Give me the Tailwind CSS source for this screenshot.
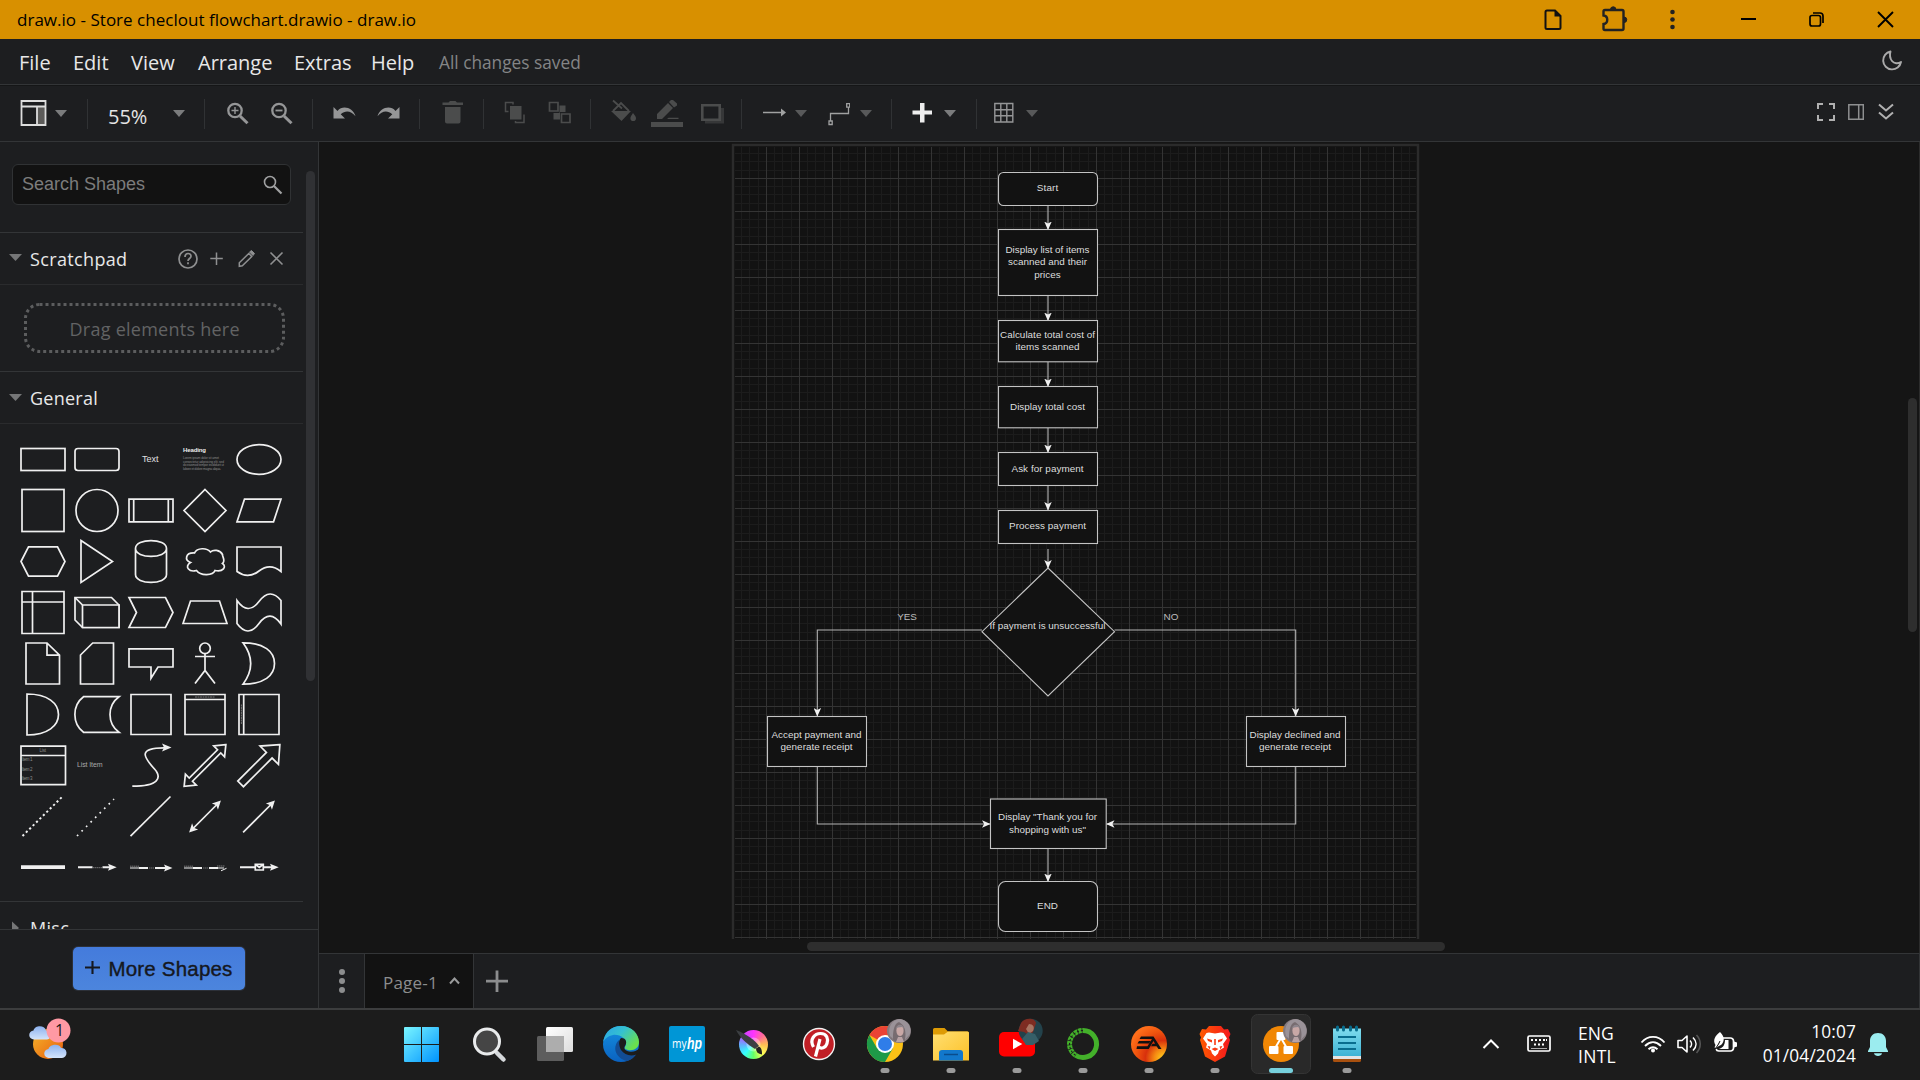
<!DOCTYPE html>
<html lang="en">
<head>
<meta charset="utf-8">
<title>draw.io - Store checlout flowchart.drawio - draw.io</title>
<script src="https://cdn.jsdelivr.net/npm/@tailwindcss/browser@4"></script>
</head>
<body class="w-[1920px] h-[1080px] overflow-hidden flex flex-col bg-[#1d1e20] font-['Open_Sans','Noto_Sans',sans-serif] text-[#e8e8e8]">

<svg class="hidden">
  <symbol id="caret" viewBox="0 86 12 55"><path d="M0 110h12l-6 7z" fill="currentColor"/></symbol>
  <symbol id="avatar" viewBox="0 0 24 24">
    <circle cx="12" cy="12" r="12" fill="#857b7f"/>
    <path d="M12 1C5 2 3 9 4 19l5 4h7l5-5C22 9 19 1 12 1z" fill="#776c70"/>
    <path d="M12 3c-6 2-6 12-6 17l-3-3C0 8 6 0 13 0c7 1 12 7 10 15l-5 6c1-7 1-14-6-18z" fill="#9a9298"/>
    <ellipse cx="13" cy="11.500" rx="3.600" ry="5.500" fill="#c9a8a6"/>
    <path d="M9 9.500c1-5 7-5 8 0l-2-1.500-4 .5z" fill="#8d858c"/>
    <path d="M11 18h4l2 5H9z" fill="#b9a3a5"/>
  </symbol>
</svg>

<!-- Window title bar -->
<header class="h-[39px] shrink-0 bg-[#d89000] text-black flex items-center pl-[17px]">
  <span class="text-[17px] leading-none whitespace-nowrap tracking-[.02px]">draw.io - Store checlout flowchart.drawio - draw.io</span>
  <svg class="ml-auto w-[18px] h-[39px]" viewBox="1544 0 18 39" fill="none" stroke="#111" stroke-width="2"><path d="M1547 10.500h8l5.500 5.500v11.500a1.500 1.500 0 0 1-1.500 1.500h-12a1.500 1.500 0 0 1-1.500-1.500v-15.500a1.500 1.500 0 0 1 1.500-1.500z"/><path d="M1554.500 10v6.500h6.500z" fill="#111" stroke="none"/></svg>
  <svg class="ml-[39px] w-[27px] h-[39px]" viewBox="1601 0 27 39"><path d="M1605 10h17a1.500 1.500 0 0 1 1.500 1.500v17a1.500 1.500 0 0 1-1.500 1.500h-17a1.500 1.500 0 0 1-1.500-1.500v-4.500c5-.5 5-8 0-8.500v-4a1.500 1.500 0 0 1 1.500-1.500z" fill="none" stroke="#222" stroke-width="2.400"/><path d="M1610.500 9.500a2.700 2.700 0 0 1 5.400 0zM1624 17a2.700 2.700 0 0 1 0 5.500z" fill="#222" stroke="#222"/></svg>
  <svg class="ml-[41px] w-2 h-[39px]" viewBox="1669 0 8 39" fill="#222"><circle cx="1672.500" cy="12" r="2.300"/><circle cx="1672.500" cy="19.500" r="2.300"/><circle cx="1672.500" cy="27" r="2.300"/></svg>
  <svg class="ml-[64px] w-[15px] h-[39px]" viewBox="1741 0 15 39"><path d="M1741 18h15v2h-15z"/></svg>
  <svg class="ml-[52px] w-[17px] h-[39px]" viewBox="1808 0 17 39" fill="none" stroke="#000" stroke-width="1.700"><rect x="1810" y="15.500" width="10.500" height="10.500" rx="2"/><path d="M1813 13h7a3 3 0 0 1 3 3v7"/></svg>
  <svg class="ml-[52px] mr-[26px] w-[17px] h-[39px]" viewBox="1877 0 17 39" stroke="#000" stroke-width="1.900"><path d="M1878 12l15 15m0-15l-15 15"/></svg>
</header>

<!-- Menu bar -->
<nav class="h-[46px] shrink-0 border-b border-[#333537] flex items-center pl-[19px] text-[20px] leading-none whitespace-nowrap">
  <span class="w-[54px] pt-[3px]">File</span>
  <span class="w-[58px] pt-[3px]">Edit</span>
  <span class="w-[67px] pt-[3px]">View</span>
  <span class="w-[96px] pt-[3px]">Arrange</span>
  <span class="w-[77px] pt-[3px]">Extras</span>
  <span class="w-[68px] pt-[3px]">Help</span>
  <span class="text-[17.300px] pt-[2px] text-[#848586]">All changes saved</span>
  <svg class="ml-auto mr-[17px] w-[23px] h-[45px]" viewBox="1880 39 23 45"><path d="M1890.500 51.500a9 9 0 1 0 10.500 10.500c-3 2-7 1.500-9-1s-2.500-6-1.500-9.500z" fill="none" stroke="#aaa" stroke-width="1.900" stroke-linejoin="round"/></svg>
</nav>

<!-- Toolbar -->
<div class="h-[57px] shrink-0 border-t border-t-[#151617] border-b border-b-[#333537] flex items-stretch text-[#7b7c7d]">
  <svg class="ml-[20px] w-[27px] h-[55px]" viewBox="20 86 27 55"><path d="M37 107h9v18h-9z" fill="#5c5b59"/><path d="M21.500 101h24v24h-24zM21.500 106.500h24M37 106.500V125" fill="none" stroke="#ddd" stroke-width="1.800"/></svg>
  <svg class="ml-[8px] w-[12px] h-[55px]"><use href="#caret"/></svg>
  <i class="ml-[20px] w-px h-[30px] mt-[13px] bg-[#303234]"></i>
  <span class="ml-[20px] w-[41px] text-[20px] leading-none mt-[21px] text-[#e4e4e4]">55%</span>
  <svg class="ml-[24px] w-[12px] h-[55px]"><use href="#caret"/></svg>
  <i class="ml-[19px] w-px h-[30px] mt-[13px] bg-[#303234]"></i>
  <svg class="ml-[22px] w-[22px] h-[55px]" viewBox="227 86 22 55" fill="none" stroke="#959697"><circle cx="235" cy="110.500" r="6.700" stroke-width="2.300"/><path d="M240 116l7.500 7.300" stroke-width="3"/><path d="M231.500 110.500h7M235 107v7" stroke-width="1.400"/></svg>
  <svg class="ml-[22px] w-[22px] h-[55px]" viewBox="271 86 22 55" fill="none" stroke="#959697"><circle cx="279" cy="110.500" r="6.700" stroke-width="2.300"/><path d="M284 116l7.500 7.300" stroke-width="3"/><path d="M275.500 110.500h7" stroke-width="1.800"/></svg>
  <i class="ml-[19px] w-px h-[30px] mt-[13px] bg-[#303234]"></i>
  <svg class="ml-[20px] w-[23px] h-[55px]" viewBox="333 86 23 55"><path d="M333.500 107v11.500H345l-4.300-4.300c5-4.200 10.500-3.200 14.800 2C353 108 343 104.500 337.500 111z" fill="#959697"/></svg>
  <svg class="ml-[21px] w-[23px] h-[55px]" viewBox="377 86 23 55"><path d="M399.500 107v11.500H388l4.300-4.300c-5-4.200-10.500-3.200-14.800 2C380 108 390 104.500 395.500 111z" fill="#959697"/></svg>
  <i class="ml-[19px] w-px h-[30px] mt-[13px] bg-[#303234]"></i>
  <svg class="ml-[22px] w-[21px] h-[55px]" viewBox="442 86 21 55" fill="#4b4c4c"><path d="M442.500 102.500h6l1.500-1.500h5.500l1.500 1.500h6v2.500h-20.500zM445 107h15.500v14.500a2 2 0 0 1-2 2h-11.500a2 2 0 0 1-2-2z"/></svg>
  <i class="ml-[20px] w-px h-[30px] mt-[13px] bg-[#303234]"></i>
  <svg class="ml-[20px] w-[23px] h-[55px]" viewBox="504 86 23 55"><path d="M510 106h11.500v13.500H510z" fill="#4b4c4c"/><path d="M508.500 111.500h-3v-9h7.500v2M524 114.500v8h-8.500v-1.500" fill="none" stroke="#4b4c4c" stroke-width="1.500"/></svg>
  <svg class="ml-[21px] w-[23px] h-[55px]" viewBox="548 86 23 55"><path d="M559.500 105.500h6V112h-5.500v7.500h-6.500V113h6z" fill="#4b4c4c"/><path d="M549.500 102.500h8.500v8.500h-8.500zM561.500 114h8.500v8.500h-8.500z" fill="none" stroke="#4b4c4c" stroke-width="1.700"/></svg>
  <i class="ml-[19px] w-px h-[30px] mt-[13px] bg-[#303234]"></i>
  <svg class="ml-[20px] w-[25px] h-[55px]" viewBox="611 86 25 55"><path d="M613 100.500l9 8M613 111l8-8 8 8" fill="none" stroke="#4b4c4c" stroke-width="1.800"/><path d="M611 111h20l-9.500 10zM633 113c2 2.500 3 4 3 5.200a2.800 2.800 0 0 1-5.600 0c0-1.200 1-2.700 2.600-5.200z" fill="#4b4c4c"/></svg>
  <svg class="ml-[15px] w-[32px] h-[55px]" viewBox="651 86 32 55" fill="#4b4c4c"><path d="M657 119v-5l11-11 5 5-11 11zM669 102l2-2h2l4 3.500v2l-3 2zM667 119l1.500-1.200h10V119zM651 122h32v5h-32z"/></svg>
  <svg class="ml-[18px] w-[23px] h-[55px]" viewBox="701 86 23 55"><path d="M705 108h19v15.500h-19z" fill="#363738"/><path d="M702.300 105.300h17.400v14.400h-17.400z" fill="#1d1e20" stroke="#4b4c4c" stroke-width="2.600"/></svg>
  <i class="ml-[17px] w-px h-[30px] mt-[13px] bg-[#303234]"></i>
  <svg class="ml-[21px] w-[23px] h-[55px]" viewBox="763 86 23 55" fill="#a0a1a1"><path d="M763 111.800h19v1.500h-19zM781 108.500l5 4-5 4z"/></svg>
  <svg class="ml-[9px] w-[12px] h-[55px] text-[#58595a]"><use href="#caret"/></svg>
  <svg class="ml-[21px] w-[22px] h-[55px]" viewBox="828 86 22 55" fill="none" stroke="#a0a1a1" stroke-width="1.300"><path d="M830.500 121v-7.500h18V107"/><path d="M829 121h3.200v3.500H829zM846.700 103.700h3v3.500h-3z"/></svg>
  <svg class="ml-[10px] w-[12px] h-[55px] text-[#58595a]"><use href="#caret"/></svg>
  <i class="ml-[19px] w-px h-[30px] mt-[13px] bg-[#303234]"></i>
  <svg class="ml-[20px] w-[20px] h-[55px]" viewBox="912 86 20 55"><path d="M920 103h4.500v7.500h7.500v4h-7.500v8H920v-8h-7.500v-4h7.500z" fill="#eee"/></svg>
  <svg class="ml-[12px] w-[12px] h-[55px]"><use href="#caret"/></svg>
  <i class="ml-[20px] w-px h-[30px] mt-[13px] bg-[#303234]"></i>
  <svg class="ml-[17px] w-[20px] h-[55px]" viewBox="994 86 20 55"><path d="M994.800 103.500h18v18.500h-18zM994.800 109.700h18M994.800 115.800h18M1000.800 103.500v18.500M1006.800 103.500v18.500" fill="none" stroke="#959697" stroke-width="1.400"/></svg>
  <svg class="ml-[12px] w-[12px] h-[55px] text-[#58595a]"><use href="#caret"/></svg>
  <svg class="ml-auto w-[18px] h-[55px]" viewBox="1817 86 18 55" fill="none" stroke="#b0b0b0" stroke-width="2"><path d="M1818 109v-5h5m6 0h5v5m0 6v5h-5m-6 0h-5v-5"/></svg>
  <svg class="ml-[13px] w-[16px] h-[55px]" viewBox="1848 86 16 55" fill="none" stroke="#8e8f90" stroke-width="1.500"><path d="M1848.800 104.700h14.500v14.500h-14.500zM1858.700 104.700v14.500"/></svg>
  <svg class="ml-[14px] mr-[26px] w-[16px] h-[55px]" viewBox="1878 86 16 55" fill="none" stroke="#b0b0b0" stroke-width="2"><path d="M1879 104.500l7 6 7-6M1879 112.500l7 6 7-6"/></svg>
</div>

<div class="h-[866px] shrink-0 flex">
  <!-- Shape sidebar -->
  <aside class="w-[319px] shrink-0 border-r border-[#333537] flex flex-col relative">
    <div class="h-[787px] overflow-hidden w-[303px] pt-[22px] shrink-0">
      <div class="ml-3 w-[279px] h-[41px] rounded-md border border-[#303234] bg-[#121212] flex items-center pl-[9px] pr-[7px] font-['Liberation_Sans',sans-serif] text-[18px] leading-none text-[#7c7c7c]">
        <span class="-mt-0.5">Search Shapes</span>
        <svg class="ml-auto w-5 h-5" viewBox="263 174 20 20" fill="none" stroke="#a0a1a2"><circle cx="270" cy="181" r="5.500" stroke-width="1.600"/><path d="M274 185l7.500 7.500" stroke-width="2.200"/></svg>
      </div>
      <div class="mt-[27px] h-[53px] border-y border-t-[#333537] border-b-[#2a2b2d] flex items-center pl-[9px]">
        <svg class="w-[13px] h-[51px]" viewBox="9 233 13 51"><path d="M9 254h13l-6.500 7z" fill="#757677"/></svg>
        <span class="ml-2 text-[18px] font-medium leading-none tracking-[.35px]">Scratchpad</span>
        <svg class="ml-auto mr-[19px] w-[108px] h-[51px]" viewBox="176 233 108 51" fill="none" stroke="#8f9091">
          <circle cx="188" cy="259" r="9" stroke-width="1.700"/><path d="M185 257c0-4.500 6-4.500 6-.8 0 2.300-3 2.300-3 4.800m0 1.300v2" stroke-width="1.700"/>
          <path d="M210.300 258.500h12.500m-6.300-6v12.500" stroke-width="1.500"/>
          <path d="M239.300 266.300v-3.600l9.500-9.200 3 3-9.500 9.200z" stroke-width="1.500"/><path d="M249.500 252l2-1.500 3 3-1.500 2z" fill="#8f9091"/>
          <path d="M270.500 252.500l12 12m0-12l-12 12" stroke-width="1.600"/>
        </svg>
      </div>
      <svg class="mt-[17px] ml-[23px] w-[264px] h-[52px]" viewBox="23 302 264 52"><rect x="25.500" y="304.500" width="258" height="47" rx="14" fill="none" stroke="#5c5d5e" stroke-width="3" stroke-dasharray="3 3"/><text x="154.500" y="335.800" text-anchor="middle" class="text-[18px]" textLength="170" fill="#626364">Drag elements here</text></svg>
      <div class="mt-[17px] h-[53px] border-y border-t-[#333537] border-b-[#2a2b2d] flex items-center pl-[9px]">
        <svg class="w-[13px] h-[51px]" viewBox="9 372 13 51"><path d="M9 394h13l-6.500 7z" fill="#757677"/></svg>
        <span class="ml-2 text-[18px] font-medium leading-none tracking-[.25px]">General</span>
      </div>
      <div class="mt-[10px] ml-4 w-[270px] grid grid-cols-5 auto-rows-[51px] fill-none stroke-[#f0f0f0] [stroke-width:1.7px]">
        <svg viewBox="-27 -25.500 54 51"><rect x="-22" y="-11" width="44" height="22"/></svg>
        <svg viewBox="-27 -25.500 54 51"><rect x="-22" y="-11" width="44" height="22" rx="3"/></svg>
        <svg viewBox="-27 -25.500 54 51" class="fill-[#e0e0e0] stroke-none font-['Liberation_Sans']"><text x="-.700" y="2.700" text-anchor="middle" class="text-[9px]" textLength="16.500">Text</text></svg>
        <svg viewBox="-27 -25.500 54 51" class="fill-[#eee] stroke-none font-['Liberation_Sans']"><text x="-22" y="-8" class="text-[6px] font-bold" textLength="23">Heading</text><g class="text-[3.200px]" fill="#8a8a8a"><text x="-22" y="-.500" textLength="36">Lorem ipsum dolor sit amet</text><text x="-22" y="3" textLength="41">consectetur adipisicing elit, sed</text><text x="-22" y="6.500" textLength="41">do eiusmod tempor incididunt ut</text><text x="-22" y="10" textLength="38">labore et dolore magna aliqua.</text></g></svg>
        <svg viewBox="-27 -25.500 54 51"><ellipse rx="22" ry="14.800"/></svg>

        <svg viewBox="-27 -25.500 54 51"><rect x="-21" y="-21" width="42" height="42"/></svg>
        <svg viewBox="-27 -25.500 54 51"><circle r="21"/></svg>
        <svg viewBox="-27 -25.500 54 51"><path d="M-22-11.300h44v22.600h-44zM-17.300-11.300v22.600M17.300-11.300v22.600"/></svg>
        <svg viewBox="-27 -25.500 54 51"><path d="M0-21L21 0 0 21-21 0z"/></svg>
        <svg viewBox="-27 -25.500 54 51"><path d="M-22 11.300L-14.500-11.300H22L14.500 11.300z"/></svg>

        <svg viewBox="-27 -25.500 54 51"><path d="M-22 0L-14.500-14.700h29L22 0l-7.500 14.700h-29z"/></svg>
        <svg viewBox="-27 -25.500 54 51"><path d="M-16-21L15.500 0-16 21z"/></svg>
        <svg viewBox="-27 -25.500 54 51"><path d="M-15.500-13C-15.500-23.500 15.500-23.500 15.500-13V13C15.500 23.500-15.500 23.500-15.500 13zM-15.500-13C-15.500-2.500 15.500-2.500 15.500-13"/></svg>
        <svg viewBox="-27 -25.500 54 51"><path d="M-10.500-8.500C-20-9-20.500-1-14.500 1C-21 5-16 11-8.500 9C-4 15 8 14 10 9C18 11 22 5 17.500 2C21-1 17-5 17.500-7C15-12 8-12 5.500-9.500C2-14-8-14-10.500-8.500z"/></svg>
        <svg viewBox="-27 -25.500 54 51"><path d="M-22-14.500H22V10Q11 1 0 9.500T-22 10z"/></svg>

        <svg viewBox="-27 -25.500 54 51"><path d="M-21-21h42v42h-42zM-21-10.500h42M-10.500-21v42"/></svg>
        <svg viewBox="-27 -25.500 54 51"><path d="M-22-15H14.500L22-7.500V15H-14.500L-22 7.500z" fill="#27292a"/><path d="M-14.500-7.500H22V15H-14.500z" fill="#1d1e20"/><path d="M-22-15l7.500 7.500"/></svg>
        <svg viewBox="-27 -25.500 54 51"><path d="M-22-15H14.500L22 0 14.500 15H-22L-14.500 0z"/></svg>
        <svg viewBox="-27 -25.500 54 51"><path d="M-22 11L-14.500-11.500h29L22 11z"/></svg>
        <svg viewBox="-27 -25.500 54 51"><path d="M-22-12Q-11 3.500 0-11T22-12V11.500Q11-4 0 11T-22 11z"/></svg>

        <svg viewBox="-27 -25.500 54 51"><path d="M-17-20.500H4L16.500-8.300V20.500H-17zM4-20.500V-8.300H16.500"/></svg>
        <svg viewBox="-27 -25.500 54 51"><path d="M-4.300-20.500H16.500V20.500h-33V-8.500z"/></svg>
        <svg viewBox="-27 -25.500 54 51"><path d="M-22-14.700h44V3.500H7L0 14.700V3.500h-22z"/></svg>
        <svg viewBox="-27 -25.500 54 51"><circle cy="-15.200" r="5.300"/><path d="M0-9.900V7M-10-7h20M-10 20L0 7l10 13"/></svg>
        <svg viewBox="-27 -25.500 54 51"><path d="M-16-20.700C5-20.700 15.500-12 15.500 0S5 20.700-16 20.700Q-.600 0-16-20.700z"/></svg>

        <svg viewBox="-27 -25.500 54 51"><path d="M-16-20.500C5-20.500 15.500-11 15.500 0S5 20.500-16 20.500z"/></svg>
        <svg viewBox="-27 -25.500 54 51"><path d="M-13.500-17.800H22C10-9 10 9 22 17.800H-13.500C-25 9-25-9-13.500-17.800z"/></svg>
        <svg viewBox="-27 -25.500 54 51"><path d="M-20-20h40v40h-40z"/></svg>
        <svg viewBox="-27 -25.500 54 51"><path d="M-20-20h40v40h-40zM-20-15h40"/><path d="M-10-17.500H10" stroke="#777" stroke-width="1" stroke-dasharray="2 .500"/></svg>
        <svg viewBox="-27 -25.500 54 51"><path d="M-20-20h40v40h-40zM-15.300-20v40"/><path d="M-17.600-10V10" stroke="#777" stroke-width="1" stroke-dasharray="2 .500"/></svg>

        <svg viewBox="-27 -25.500 54 51" class="font-['Liberation_Sans']"><path d="M-22-19.300h44.500v38.500h-44.500zM-22-10h44.500"/><g class="text-[4.500px] stroke-none" fill="#8c8c8c"><text x="-3.500" y="-13.500" textLength="6.500">List</text><text x="-21" y="-4.200" textLength="10.500">Item 1</text><text x="-21" y="5.200" textLength="10.500">Item 2</text><text x="-21" y="14.700" textLength="10.500">Item 3</text></g></svg>
        <svg viewBox="-27 -25.500 54 51" class="fill-[#a8a8a8] stroke-none font-['Liberation_Sans']"><text x="-20" y="1.700" textLength="25.500" class="text-[7px]">List Item</text></svg>
        <svg viewBox="-27 -25.500 54 51"><path d="M-18.700 20.700C8 20.700 11 12 3.500 3.500C-7-8-14-17.700 13-17.700"/><path d="M11-22l9.500 4-9.500 4 2-4z" fill="#f0f0f0" stroke="none"/></svg>
        <svg viewBox="-27 -25.500 54 51"><path transform="rotate(-45)" d="M29.500 0L20-7.700V-2.300H-20V-7.700L-29.500 0-20 7.700V2.300H20V7.700z"/></svg>
        <svg viewBox="-27 -25.500 54 51"><path transform="rotate(-45)" d="M29.500 0L14.500-13V-4H-26V4H14.500V13z"/></svg>

        <svg viewBox="-27 -25.500 54 51"><path d="M-20.500 19.500L19-19.500" stroke-width="2" stroke-dasharray="2.200 2.600"/></svg>
        <svg viewBox="-27 -25.500 54 51"><path d="M-20 19.500L17-17.500" stroke-width="1.700" stroke-dasharray="1.700 4.700"/></svg>
        <svg viewBox="-27 -25.500 54 51"><path d="M-20.500 19.700L19.500-20"/></svg>
        <svg viewBox="-27 -25.500 54 51"><g transform="rotate(-45)"><path d="M-18 0H18"/><path d="M14-4.300L22.500 0 14 4.300l2-4.300zM-14-4.300L-22.500 0-14 4.300l-2-4.300z" fill="#f0f0f0" stroke="none"/></g></svg>
        <svg viewBox="-27 -25.500 54 51"><g transform="rotate(-45)"><path d="M-22.500 0H18"/><path d="M14-4.300L22.500 0 14 4.300l2-4.300z" fill="#f0f0f0" stroke="none"/></g></svg>

        <svg viewBox="-27 -25.500 54 51"><path d="M-22-.300h44" stroke-width="3.700"/></svg>
        <svg viewBox="-27 -25.500 54 51"><path d="M-19-.300h14.500M5.500-.300H15" stroke-width="2"/><path d="M-4 .2H5" stroke="#777" stroke-width="1" stroke-dasharray="1.500 .500"/><path d="M11-3.800L19.700-.300 11 3.200l1.500-3.500z" fill="#f0f0f0" stroke="none"/></svg>
        <svg viewBox="-27 -25.500 54 51"><path d="M-21 .5h9" stroke-width="1"/><path d="M-21-1.300h9M-2 .5H3" stroke="#777" stroke-width="1" stroke-dasharray="1.500 .500"/><path d="M-12 .5h9M4 .5h13" stroke-width="2"/><path d="M13-3L21.500 .5 13 4l1.500-3.500z" fill="#f0f0f0" stroke="none"/></svg>
        <svg viewBox="-27 -25.500 54 51"><path d="M-21 .5h9M13 .5h6" stroke-width="1"/><path d="M-21-1.300h9M-2 .5H3M12-1.500h8" stroke="#777" stroke-width="1" stroke-dasharray="1.500 .500"/><path d="M-12 .5h9M4 .5h9" stroke-width="2"/><path d="M16 3.300L21.500 .8" stroke-width="1"/></svg>
        <svg viewBox="-27 -25.500 54 51"><path d="M-19-.300H-4M5-.300H15" stroke-width="2"/><path d="M-3.700-3.100H4.300V2.500H-3.700zl4 3 4-3"/><path d="M11-3.800L19.700-.300 11 3.200l1.500-3.500z" fill="#f0f0f0" stroke="none"/></svg>
      </div>
      <div class="mt-[8px] h-[53px] border-t border-[#333537] flex items-center pl-[9px]">
        <svg class="w-[13px] h-[51px]" viewBox="9 902 13 51"><path d="M12 920.500v13l7-6.500z" fill="#757677"/></svg>
        <span class="ml-2 text-[18px] font-medium leading-none tracking-[.3px]">Misc</span>
      </div>
    </div>
    <div class="flex-1 border-t border-[#333537] flex justify-center pt-[17px]">
      <div class="w-[172px] h-[43px] rounded-[5px] bg-linear-to-b from-[#447bdc] to-[#4c85dd] shadow-[0_0_0_1px_#2c3038] text-[#15181f] flex items-center justify-center gap-2 font-['Liberation_Sans',sans-serif] text-[20.500px] leading-none">
        <svg class="w-[15px] h-[15px] -mt-0.5" viewBox="0 0 15 15"><path d="M7.500 1v13M0 7.500h15" stroke="currentColor" stroke-width="2.100"/></svg>
        <span class="pt-px tracking-[.2px] [-webkit-text-stroke:.4px_#15181f]">More Shapes</span>
      </div>
    </div>
    <div class="absolute left-[306px] top-[29px] w-[9px] h-[510px] rounded-full bg-[#303134]"></div>
  </aside>

  <main class="flex-1 flex flex-col">
    <!-- Diagram canvas -->
    <div class="h-[811px] bg-[#151515] border-r border-[#2c2c2c] relative">
      <svg class="block w-[1599px] h-[797px]" viewBox="319 142 1599 797">
        <defs>
          <pattern id="grid" x="733" y="145" width="33" height="33" patternUnits="userSpaceOnUse">
            <path d="M8 0h1v33h-1zM16 0h1v33h-1zM25 0h1v33h-1zM0 8h33v1H0zM0 16h33v1H0zM0 25h33v1H0z" fill="#1c1c1c"/>
            <path d="M0 0h33v1H1v32H0z" fill="#343434"/>
          </pattern>
          <marker id="arr" viewBox="0 0 9 8" refX="8.500" refY="4" markerWidth="8.500" markerHeight="7.500" markerUnits="userSpaceOnUse" orient="auto"><path d="M0 0l9 4-9 4 2.200-4z" fill="#f0f0f0"/></marker>
        </defs>
        <rect x="733" y="145" width="685" height="800" fill="#121212" stroke="#2b2b2b" stroke-width="2.500"/>
        <rect x="735" y="147" width="681" height="792" fill="url(#grid)"/>
        <g fill="none" stroke="#b4b4b4" stroke-width="1.100">
          <g marker-end="url(#arr)">
            <path d="M1048 205v24.500"/><path d="M1048 296v24.500"/><path d="M1048 362v24.500"/><path d="M1048 428v24.500"/><path d="M1048 485v25"/><path d="M1048 549v19"/><path d="M1048 848.500v33"/>
            <path d="M982 630H817.300v86"/><path d="M1114.500 630h181.200v86"/><path d="M817.300 766v58H990"/><path d="M1295.700 766v58H1106.500"/>
          </g>
          <g fill="#121212" stroke="#c4c4c4">
            <rect x="998.500" y="172.500" width="99" height="33" rx="5"/>
            <rect x="998.500" y="229.500" width="99" height="66"/>
            <rect x="998.500" y="320.500" width="99" height="41.300"/>
            <rect x="998.500" y="386.500" width="99" height="41.300"/>
            <rect x="998.500" y="452.500" width="99" height="33"/>
            <rect x="998.500" y="510.500" width="99" height="33"/>
            <path d="M1048 568l66.500 63.700L1048 696l-66-64.300z"/>
            <rect x="767.500" y="716.500" width="99" height="50"/>
            <rect x="1246.500" y="716.500" width="99" height="50"/>
            <rect x="990.500" y="799" width="115.700" height="49.500"/>
            <rect x="998.500" y="881.500" width="99" height="50" rx="7"/>
          </g>
        </g>
        <g class="font-['Liberation_Sans',sans-serif] text-[9.900px]" fill="#dedede" text-anchor="middle">
          <text x="1047.500" y="191" textLength="21.500">Start</text>
          <text x="1047.500" y="252.500" textLength="84">Display list of items</text><text x="1047.500" y="264.800" textLength="79">scanned and their</text><text x="1047.500" y="277.500" textLength="26.500">prices</text>
          <text x="1047.500" y="337.500" textLength="95">Calculate total cost of</text><text x="1047.500" y="349.700" textLength="64">items scanned</text>
          <text x="1047.500" y="409.700" textLength="75">Display total cost</text>
          <text x="1047.500" y="471.700" textLength="72">Ask for payment</text>
          <text x="1047.500" y="528.700" textLength="77">Process payment</text>
          <text x="1047.500" y="628.700" textLength="116">If payment is unsuccessful</text>
          <g fill="#bcbcbc"><text x="907" y="619.700" textLength="19.500">YES</text><text x="1171" y="619.700" textLength="15">NO</text></g>
          <text x="816.500" y="737.700" textLength="90">Accept payment and</text><text x="816.500" y="749.700" textLength="72">generate receipt</text>
          <text x="1295" y="737.700" textLength="91">Display declined and</text><text x="1295" y="749.700" textLength="72">generate receipt</text>
          <text x="1047.500" y="819.700" textLength="99">Display "Thank you for</text><text x="1047.500" y="832.700" textLength="77">shopping with us"</text>
          <text x="1047.500" y="908.700" textLength="21">END</text>
        </g>
      </svg>
      <div class="mt-[3px] ml-[488px] w-[638px] h-[9px] rounded-full bg-[#2e2e2e]"></div>
      <div class="absolute right-[2px] top-[256px] w-[9px] h-[234px] rounded-full bg-[#2e2e2e]"></div>
    </div>
    <!-- Page tabs -->
    <div class="flex-1 border-t border-r border-[#333537] flex text-[#8c8d8e]">
      <div class="w-[45px] flex flex-col items-center justify-center gap-[3px]"><i class="size-1.5 rounded-full bg-current"></i><i class="size-1.5 rounded-full bg-current"></i><i class="size-1.5 rounded-full bg-current"></i></div>
      <div class="w-[110px] bg-[#121212] border-x border-[#333537] flex items-center pl-[18px] text-[17px] font-medium leading-none"><span class="pt-0.5 tracking-[.2px]">Page-1</span>
        <svg class="ml-[11px] w-[11px] h-[8px]" viewBox="0 0 11 8" fill="none" stroke="#9a9b9c" stroke-width="2"><path d="M1 6.500l4.500-5 4.500 5"/></svg>
      </div>
      <svg class="ml-[12px] w-[22px] h-[54px]" viewBox="0 0 22 54"><path d="M11 16.500v21.500M0 27.200h22" stroke="#8c8d8e" stroke-width="2.800"/></svg>
    </div>
  </main>
</div>

<!-- Taskbar -->
<footer class="h-[72px] shrink-0 border-t-2 border-[#3c3d3e] bg-[#1c1c1c] flex text-white">
  <div class="w-[390px]">
    <svg class="w-[390px] h-[70px]" viewBox="0 1010 390 70">
      <defs>
        <linearGradient id="sun" x1="0" y1="0" x2="1" y2="1"><stop offset="0" stop-color="#f5b62c"/><stop offset="1" stop-color="#e85c0c"/></linearGradient>
        <linearGradient id="cl" x1="0" y1="0" x2="0" y2="1"><stop offset="0" stop-color="#8db2ee"/><stop offset="1" stop-color="#d4e4fb"/></linearGradient>
      </defs>
      <circle cx="48" cy="1044" r="15" fill="url(#sun)"/>
      <path d="M34 1039.500a4.500 4.500 0 0 1-.5-9c1-5 11-6 12.500 0a4.500 4.500 0 0 1 1 9z" fill="url(#cl)"/>
      <path d="M49 1058a4.500 4.500 0 0 1-.5-9c1-5 11-6 12.500-1a5 5 0 0 1 1 10z" fill="url(#cl)"/>
      <circle cx="58.500" cy="1030.500" r="12" fill="#ff99a4"/>
      <text x="59.500" y="1036" text-anchor="middle" class="text-[16px]" fill="#1a1a1a">1</text>
    </svg>
  </div>
  <!-- Start -->
  <svg class="w-[66px] h-[70px]" viewBox="-33 -34 66 70"><defs><linearGradient id="win" gradientUnits="userSpaceOnUse" x1="-18" y1="-17" x2="16" y2="18"><stop offset="0" stop-color="#78f4ff"/><stop offset="1" stop-color="#0093ff"/></linearGradient></defs><path d="M-18.500-17h16.500v17h-17v-16zM-1-17h16.500l.5 1v16H-1zM-19 1h17v17h-16.500l-.5-1zM-1 1h17v16l-.5 1H-1z" fill="url(#win)"/></svg>
  <!-- Search -->
  <svg class="w-[66px] h-[70px]" viewBox="-33 -34 66 70"><path d="M8 9l6.500 6.500" stroke="#d5d8db" stroke-width="4.500" stroke-linecap="round"/><circle cx="-2" cy="-2.500" r="12.500" fill="#454545" stroke="#e9ebec" stroke-width="3"/></svg>
  <!-- Task view -->
  <svg class="w-[66px] h-[70px]" viewBox="-33 -34 66 70"><defs><linearGradient id="tv" x1="0" y1="0" x2="1" y2="1"><stop offset="0" stop-color="#fff"/><stop offset="1" stop-color="#ddd"/></linearGradient></defs><rect x="-9" y="-17" width="27" height="25" rx="1.500" fill="url(#tv)"/><rect x="-18" y="-8" width="27" height="25" rx="1.500" fill="#5d5d5d"/><path d="M-9-8H9V8H-9z" fill="#adadad"/></svg>
  <!-- Edge -->
  <svg class="w-[66px] h-[70px]" viewBox="-33 -34 66 70"><defs><linearGradient id="e1" x1="0" y1="0" x2="1" y2=".6"><stop offset="0" stop-color="#2aa3e8"/><stop offset=".5" stop-color="#35c1d0"/><stop offset="1" stop-color="#6ae04c"/></linearGradient><linearGradient id="e2" x1="0" y1="0" x2="0" y2="1"><stop offset="0" stop-color="#1590e0"/><stop offset="1" stop-color="#0a62c0"/></linearGradient></defs><circle r="18" fill="url(#e2)"/><path d="M-18-1C-16-13-9-18 0-18C11-18 18-10 18-2C18 4 13 7 7 6C3 5 3 4 5 1C6-5-1-10-8-9C-13-8-17-5-18-1z" fill="url(#e1)"/><path d="M-2-4C-10 4-4 15 6 17C10 16 14 13 16 9C8 13-2 9-2-4z" fill="#124c94"/><path d="M0-6C6-6 6-1 4 2C2 5 5 7 8 7.500C12 8.500 15 7 18 5L19 9C12 13 4 12 0 6C-2 2-3-3 0-6z" fill="#1c1c1c"/></svg>
  <!-- myHP -->
  <svg class="w-[66px] h-[70px]" viewBox="-33 -34 66 70"><rect x="-18" y="-18" width="36" height="36" rx="2" fill="#0096d6"/><text x="-15" y="4" class="text-[12px]" fill="#fff" textLength="14.500" lengthAdjust="spacingAndGlyphs">my</text><text x="0" y="5" class="text-[17px] font-bold italic font-['Liberation_Sans']" fill="#fff" textLength="15" lengthAdjust="spacingAndGlyphs">hp</text></svg>
  <!-- Krita -->
  <svg class="w-[66px] h-[70px]" viewBox="-33 -34 66 70"><foreignObject x="-14" y="-14" width="29" height="29"><div class="size-[29px] rounded-full bg-[conic-gradient(from_0deg,#f3f,#ff6a9a,#fb5,#ff5,#6f6,#3ff,#6af,#c4f,#f3f)]"></div></foreignObject><circle cx=".500" cy=".500" r="7" fill="#fff" opacity=".35"/><path d="M-17-14C-7-10 2-4 6 2L2 5C-5 1-13-6-17-14z" fill="#3c3f42"/><path d="M3 4.500L6 2.500C9 4 9 8 9 10.500C5 10 3 8 3 4.500z" fill="#222"/></svg>
  <!-- Pinterest -->
  <svg class="w-[66px] h-[70px]" viewBox="-33 -34 66 70"><circle r="15.500" fill="#c11f26" stroke="#f2f2f2" stroke-width="1.400"/><path d="M-5.500 3C-10-5-4-10.500 1.500-10.500C8-10.500 9.500-5 8-.5C6.500 4 2 5.500-.5 2.500M1-5L-3.500 12.500" fill="none" stroke="#fff" stroke-width="3.200"/></svg>
  <!-- Chrome -->
  <svg class="w-[66px] h-[70px]" viewBox="-33 -34 66 70"><circle r="18" fill="#fbc116"/><path d="M0 0L-15.600-9A18 18 0 0 1 15.600-9H0z" fill="#ea4335"/><path d="M0 0L7.800 4.500 0 18A18 18 0 0 1-15.600-9L-7.800 4.500z" fill="#1e9a48"/><circle r="9" fill="#fff"/><circle r="7" fill="#2f7de9"/><use href="#avatar" x="2" y="-25" width="24" height="24"/><rect x="-4.500" y="24" width="9" height="5" rx="2.500" fill="#9a9a9a"/></svg>
  <!-- File Explorer -->
  <svg class="w-[66px] h-[70px]" viewBox="-33 -34 66 70"><defs><linearGradient id="fo" x1="0" y1="0" x2="1" y2="1"><stop offset="0" stop-color="#ffdf72"/><stop offset="1" stop-color="#fcc127"/></linearGradient></defs><path d="M-18-14.500a1.500 1.500 0 0 1 1.500-1.500h10l3.500 3.500h19.500a1.500 1.500 0 0 1 1.500 1.500v10H-18z" fill="#dd9b05"/><path d="M-18-9.500h11l4-3h19.500a1.500 1.500 0 0 1 1.500 1.500v27.500H-18z" fill="url(#fo)"/><path d="M-12 16.500V9a3 3 0 0 1 3-3H9a3 3 0 0 1 3 3v7.500z" fill="#1278cc"/><path d="M-7 10.500H7" stroke="#0a4c8c" stroke-width="1.500"/><rect x="-4.500" y="24" width="9" height="5" rx="2.500" fill="#9a9a9a"/></svg>
  <!-- YouTube -->
  <svg class="w-[66px] h-[70px]" viewBox="-33 -34 66 70"><rect x="-18" y="-12" width="36" height="24.500" rx="5" fill="#f00"/><path d="M-4-5.300L5.300 0-4 5.300z" fill="#fff"/><circle cx="13.700" cy="-13.200" r="12" fill="#23424b"/><path d="M4-21c4-6 14-5 15 0l-3 9-3 4-6-4-6-1z" fill="#7e2c22"/><path d="M12-20c4 0 6 3 4 7l-4 3-3-5z" fill="#a87462"/><path d="M5-5l6-7 7 2 4 7-6 4h-7z" fill="#365f68"/><rect x="-4.500" y="24" width="9" height="5" rx="2.500" fill="#9a9a9a"/></svg>
  <!-- Green ring -->
  <svg class="w-[66px] h-[70px]" viewBox="-33 -34 66 70" fill="none"><path d="M0-13.500A13.500 13.500 0 1 1-7.500 11.200" stroke="#43b02a" stroke-width="5"/><path d="M-7.500 11.200A13.500 13.500 0 0 1 0-13.500" stroke="#43b02a" stroke-width="5" stroke-dasharray="3.500 .700"/><path d="M-7.500 11.200A13.500 13.500 0 0 1 0-13.500" stroke="#1c1c1c" stroke-width="1.100" stroke-dasharray="2.200 1.800"/><rect x="-4.500" y="24" width="9" height="5" rx="2.500" fill="#9a9a9a"/></svg>
  <!-- EA -->
  <svg class="w-[66px] h-[70px]" viewBox="-33 -34 66 70"><defs><radialGradient id="ea" cx=".9" cy=".9" r="1"><stop offset="0" stop-color="#ffd21e"/><stop offset=".25" stop-color="#f58a12"/><stop offset=".5" stop-color="#d8300c"/><stop offset=".75" stop-color="#f0540e"/><stop offset="1" stop-color="#ff6e1a"/></radialGradient></defs><circle r="18" fill="url(#ea)"/><path d="M-8-7.500H4.500L3-5H-9.500zM-10-3H1.500L0-.5H-11.500zM-12 2.300H-1.500L4.500-7.500 12.500 5H9.500L7.500 2.300H2L3.500-.3H6L4.500-3-.3 5H-12.500z" fill="#111"/><rect x="-4.500" y="24" width="9" height="5" rx="2.500" fill="#9a9a9a"/></svg>
  <!-- Brave -->
  <svg class="w-[66px] h-[70px]" viewBox="-33 -34 66 70"><defs><linearGradient id="br" x1="0" y1="0" x2="1" y2="0"><stop offset="0" stop-color="#ff5a00"/><stop offset="1" stop-color="#f5171d"/></linearGradient></defs><path d="M-6-18H6l3 3.500 4-.5 2.500 5L14-6.500 15-4 10 12.500 0 18-10 12.500-15-4-14-6.500-15.500-10-13-15l4 .5z" fill="url(#br)"/><path d="M-6-11.500l-2.500 .5-3.500 5.500 4 5.500-1 3.500 5 3 1 3L0 12.500l3-3 1-3 5-3-1-3.500 4-5.500-3.500-5.500-2.500-.5L0-10.500z" fill="#fff"/><path d="M-8-5.500l5 1.500v2.500l-4-1.500zM8-5.500L3-4v2.500l4-1.500zM-3.500 5L0 3.500 3.500 5 0 7zM-.8-5h1.600v6h-1.600zM-7.500 2l3 .5-1 3zM7.500 2l-3 .5 1 3z" fill="#fb3a12"/><rect x="-4.500" y="24" width="9" height="5" rx="2.500" fill="#9a9a9a"/></svg>
  <!-- draw.io -->
  <svg class="w-[66px] h-[70px]" viewBox="-33 -34 66 70"><rect x="-29.500" y="-29.500" width="59" height="59" rx="6" fill="#292929" stroke="#343434"/><circle r="18" fill="#f08705"/><path d="M0-6L-7 6M0-6L7 6" stroke="#fff" stroke-width="2"/><rect x="-4.500" y="-12" width="9" height="8" rx="1" fill="#fff"/><rect x="-12" y="2" width="9.500" height="8" rx="1" fill="#fff"/><rect x="2.500" y="2" width="9.500" height="8" rx="1" fill="#fff"/><use href="#avatar" x="2" y="-25" width="24" height="24"/><rect x="-12" y="24" width="24" height="5" rx="2.500" fill="#76d0dc"/></svg>
  <!-- Notepad -->
  <svg class="w-[66px] h-[70px]" viewBox="-33 -34 66 70"><defs><linearGradient id="np" x1="0" y1="0" x2="0" y2="1"><stop offset="0" stop-color="#7fdcee"/><stop offset="1" stop-color="#3fb3d4"/></linearGradient></defs><path d="M-14 12h28v4.500a1.500 1.500 0 0 1-1.500 1.500h-25a1.500 1.500 0 0 1-1.500-1.500z" fill="#a8500f"/><path d="M-14 11h28v4h-28z" fill="#e4e4e4"/><path d="M-14-15.500h28V12h-28z" fill="url(#np)"/><path d="M-9-7H9M-9-1H9M-9 5H9" stroke="#086d8e" stroke-width="1.800"/><path d="M-9.500-17v3M-3.500-17v3M3.500-17v3M9.500-17v3" stroke="#086d8e" stroke-width="3" stroke-linecap="round"/><rect x="-4.500" y="24" width="9" height="5" rx="2.500" fill="#9a9a9a"/></svg>

  <!-- System tray -->
  <svg class="ml-[102px] w-[18px] h-[70px]" viewBox="1482 1010 18 70"><path d="M1483.500 1048l7.500-7.500 7.500 7.500" fill="none" stroke="#fff" stroke-width="2"/></svg>
  <svg class="ml-[26px] w-[26px] h-[70px]" viewBox="1526 1010 26 70"><rect x="1528" y="1036" width="22" height="15" rx="1.500" fill="none" stroke="#fff" stroke-width="1.700"/><path d="M1531 1040h2m2 0h2m2 0h2m2 0h2m1 0h1M1534 1044.500h2m2 0h2m2 0h2" stroke="#fff" stroke-width="2"/><path d="M1531 1048.500h16" stroke="#aaa" stroke-width="1"/></svg>
  <div class="ml-[26px] w-[38px] pt-[12px] text-[17.500px] leading-[23px]"><div>ENG</div><div class="tracking-[.3px]">INTL</div></div>
  <svg class="ml-[24px] w-[26px] h-[70px]" viewBox="1640 1010 26 70" fill="none" stroke="#fff" stroke-width="1.900"><path d="M1641.500 1042.500c6.500-7.500 16.500-7.500 23 0M1645 1046c5-5 11-5 16 0M1648.500 1049.300c2.800-2.600 6.200-2.600 9 0"/><circle cx="1653" cy="1050.500" r="2" fill="#fff" stroke="none"/></svg>
  <svg class="ml-[10px] w-[26px] h-[70px]" viewBox="1676 1010 26 70" fill="none" stroke="#fff" stroke-width="1.600"><path d="M1678 1040.500h4l5-4.500v16l-5-4.500h-4z" stroke-linejoin="round"/><path d="M1690 1040.500c2 2 2 5 0 7M1693 1037.500c4 4 4 9 0 13"/><path d="M1696.500 1035c5 5.500 5 12.500 0 18" stroke="#555"/></svg>
  <svg class="ml-[10px] w-[26px] h-[70px]" viewBox="1712 1010 26 70"><path d="M1723 1038h7.500a3 3 0 0 1 3 3v7a3 3 0 0 1-3 3H1719a3 3 0 0 1-3-2" fill="none" stroke="#fff" stroke-width="1.700"/><path d="M1734 1041.500l3 1v4l-3 1zM1725 1040h3.500v9H1719c3-1 6-3 6-9zM1720 1032c4 4 5 8 2 12-1 1.500-4 2-6 4l-1.500-.5 1-2.500c-3-5-.5-9 4.500-13z" fill="#fff"/><path d="M1714 1051c2-4 4-5 6-10" stroke="#1c1c1c" stroke-width="1"/></svg>
  <div class="ml-[18px] w-[100px] pt-[10px] text-right text-[17.300px] leading-[24px] tracking-[.15px]"><div>10:07</div><div>01/04/2024</div></div>
  <svg class="ml-[11px] w-[22px] h-[70px]" viewBox="1867 1010 22 70" fill="#9becef"><path d="M1878 1033c-5 0-8 3.500-8 8v6l-2 4v1h20v-1l-2-4v-6c0-4.500-3-8-8-8zM1874 1053.300h8c-.5 3.500-7.500 3.500-8 0z"/></svg>
</footer>
</body>
</html>
